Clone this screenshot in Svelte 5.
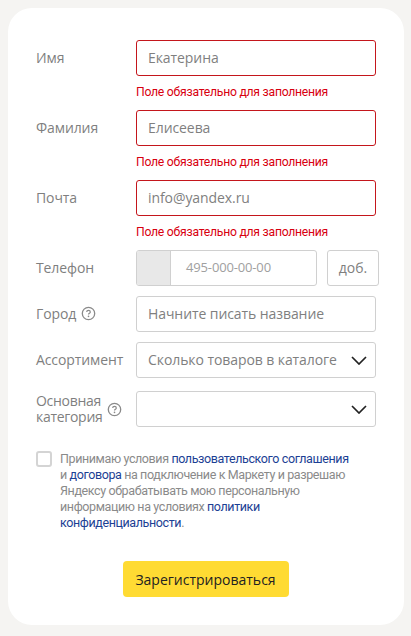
<script>
  const errorText = 'Поле обязательно для заполнения';
  const required = [
    { label: 'Имя', value: 'Екатерина' },
    { label: 'Фамилия', value: 'Елисеева' },
    { label: 'Почта', value: 'info@yandex.ru' }
  ];
</script>

<div class="page">
  <form class="card" onsubmit={(e) => e.preventDefault()}>
    {#each required as f}
      <div class="block">
        <div class="row">
          <span class="label">{f.label}</span>
          <div class="field error">{f.value}</div>
        </div>
        <div class="err">{errorText}</div>
      </div>
    {/each}

    <div class="row phone-row">
      <span class="label">Телефон</span>
      <div class="phone">
        <div class="code"></div>
        <div class="number">495-000-00-00</div>
      </div>
      <div class="ext">доб.</div>
    </div>

    <div class="row city-row">
      <span class="label">Город
        <svg class="help" viewBox="0 0 15 15" width="15" height="15" aria-hidden="true">
          <circle cx="7.5" cy="7.5" r="6.2" fill="none" stroke="#8a8a8a" stroke-width="1.3" />
          <path d="M5.7 6c0-1 .8-1.6 1.8-1.6S9.3 5 9.3 5.9c0 1.3-1.8 1.3-1.8 2.6" fill="none" stroke="#8a8a8a" stroke-width="1.2" />
          <circle cx="7.5" cy="10.4" r=".8" fill="#8a8a8a" />
        </svg>
      </span>
      <div class="field">Начните писать название</div>
    </div>

    <div class="row assort-row">
      <span class="label">Ассортимент</span>
      <div class="field select">
        <span>Сколько товаров в каталоге</span>
        <svg class="chev" viewBox="0 0 16 9" width="16" height="9" aria-hidden="true"><path d="M1 1l7 7 7-7" fill="none" stroke="#222" stroke-width="1.7" /></svg>
      </div>
    </div>

    <div class="row cat-row">
      <span class="label two">
        <span>Основная<br />категория</span>
        <svg class="help" viewBox="0 0 15 15" width="15" height="15" aria-hidden="true">
          <circle cx="7.5" cy="7.5" r="6.2" fill="none" stroke="#8a8a8a" stroke-width="1.3" />
          <path d="M5.7 6c0-1 .8-1.6 1.8-1.6S9.3 5 9.3 5.9c0 1.3-1.8 1.3-1.8 2.6" fill="none" stroke="#8a8a8a" stroke-width="1.2" />
          <circle cx="7.5" cy="10.4" r=".8" fill="#8a8a8a" />
        </svg>
      </span>
      <div class="field select">
        <span></span>
        <svg class="chev" viewBox="0 0 16 9" width="16" height="9" aria-hidden="true"><path d="M1 1l7 7 7-7" fill="none" stroke="#222" stroke-width="1.7" /></svg>
      </div>
    </div>

    <div class="agree">
      <span class="check"></span>
      <p>Принимаю условия <a href="#a">пользовательского соглашения</a> и&nbsp;<a href="#b">договора</a> на подключение к Маркету и разрешаю Яндексу обрабатывать мою персональную информацию на условиях <a href="#c">политики конфиденциальности</a>.</p>
    </div>

    <div class="actions">
      <button type="submit">Зарегистрироваться</button>
    </div>
  </form>
</div>

<style>
  :global(body) {
    margin: 0;
    background: #f5f4f2;
  }
  .page {
    height: 636px;
    box-sizing: border-box;
    padding: 8px 7px 11px 8px;
    font-family: "Open Sans", "Noto Sans", sans-serif;
    overflow: hidden;
  }
  .card {
    height: 617px;
    box-sizing: border-box;
    background: #fff;
    border-radius: 24px;
    padding: 32px 25px 0 28px;
    display: flex;
    flex-direction: column;
  }
  .block {
    height: 70px;
  }
  .row {
    display: flex;
    align-items: center;
    height: 36px;
  }
  .label {
    width: 100px;
    flex: none;
    font-size: 14px;
    letter-spacing: -0.1px;
    color: #7f7f7f;
    display: flex;
    align-items: center;
    gap: 5px;
    line-height: 16px;
    padding-bottom: 1px;
  }
  .two {
    padding-bottom: 0;
    letter-spacing: -0.3px;
  }
  .field {
    width: 240px;
    height: 36px;
    flex: none;
    box-sizing: border-box;
    border: 1px solid #d0d0d0;
    border-radius: 3px;
    padding: 0 8px 2px 11px;
    display: flex;
    align-items: center;
    font-size: 14px;
    letter-spacing: -0.08px;
    color: #7f7f7f;
    white-space: nowrap;
  }
  .error {
    border-color: #c4161c;
  }
  .err {
    margin-top: 9px;
    font-family: Roboto, sans-serif;
    font-size: 12.2px;
    letter-spacing: -0.25px;
    line-height: 15px;
    color: #d8000f;
    margin-left: 100px;
    white-space: nowrap;
  }
  .select {
    justify-content: space-between;
  }
  .chev {
    flex: none;
    margin-top: 2px;
  }
  .phone {
    width: 181px;
    height: 36px;
    flex: none;
    box-sizing: border-box;
    border: 1px solid #d0d0d0;
    border-radius: 3px;
    display: flex;
    overflow: hidden;
  }
  .code {
    width: 33px;
    background: #e8e8e8;
    border-right: 1px solid #d0d0d0;
    flex: none;
  }
  .number {
    flex: 1;
    display: flex;
    align-items: center;
    padding: 0 0 2px 15px;
    font-size: 13px;
    letter-spacing: -0.15px;
    color: #a0a0a0;
    white-space: nowrap;
  }
  .ext {
    margin-left: 10px;
    width: 52px;
    height: 36px;
    flex: none;
    box-sizing: border-box;
    border: 1px solid #d0d0d0;
    border-radius: 3px;
    padding-bottom: 2px;
    display: flex;
    align-items: center;
    justify-content: center;
    font-size: 14px;
    color: #7f7f7f;
  }
  .city-row,
  .assort-row {
    margin-top: 10px;
  }
  .cat-row {
    margin-top: 13px;
  }
  .agree {
    display: flex;
    margin-top: 24px;
    gap: 8px;
  }
  .check {
    width: 16px;
    height: 16px;
    box-sizing: border-box;
    border: 2px solid #d4d4d4;
    border-radius: 3px;
    flex: none;
  }
  .agree p {
    margin: 0;
    font-family: Roboto, sans-serif;
    font-size: 12.5px;
    letter-spacing: -0.39px;
    line-height: 16px;
    color: #8a8a8a;
    width: 295px;
  }
  .agree a {
    color: #1c3f94;
    text-decoration: none;
  }
  .actions {
    margin-top: 30px;
    display: flex;
    justify-content: center;
    padding-right: 4px;
  }
  button {
    width: 166px;
    height: 36px;
    border: none;
    border-radius: 4px;
    background: #ffdb33;
    color: #222;
    font: 14px "Open Sans", "Noto Sans", sans-serif;
  }
</style>
